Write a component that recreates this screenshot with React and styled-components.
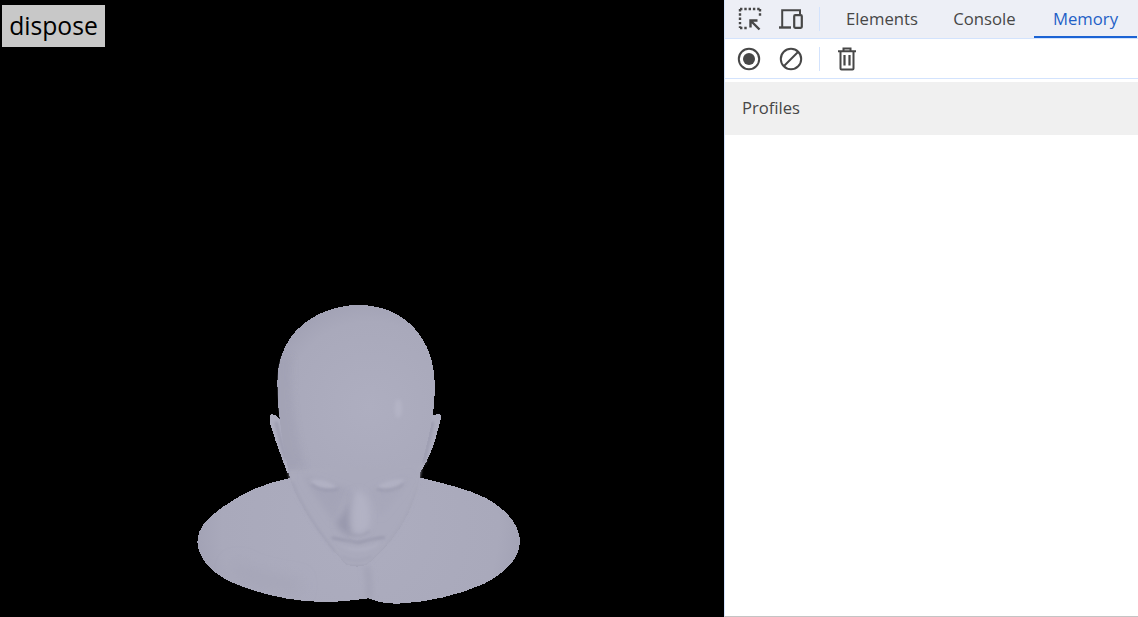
import React from 'react'
import styled, { createGlobalStyle } from 'styled-components'

const GlobalStyle = createGlobalStyle`
  html, body { margin: 0; padding: 0; background: #fff; }
  body { font-family: "Open Sans", "Noto Sans", sans-serif; }
`

const Page = styled.div`
  display: flex;
  width: 1138px;
  height: 617px;
  overflow: hidden;
`
const Viewport = styled.div`
  width: 724px;
  flex: none;
  background: #000;
  display: flex;
  flex-direction: column;
  align-items: flex-start;
`
const DisposeButton = styled.button`
  width: 103px;
  height: 42px;
  margin: 5px 0 0 2px;
  padding: 0;
  border: 0;
  background: #c8c8c8;
  color: #000;
  font-family: "Open Sans", sans-serif;
  font-size: 24.7px;
  line-height: 42px;
`
const HeadDrawing = styled.svg`
  display: block;
  width: 340px;
  height: 310px;
  margin: 253px 0 0 190px;
`
const DevTools = styled.div`
  flex: 1;
  display: flex;
  flex-direction: column;
  border-left: 1px solid #d3e3fd;
  border-bottom: 1px solid #c4c4c4;
  background: #fff;
`
const TabBar = styled.div`
  height: 38px;
  display: flex;
  align-items: center;
  background: #edeff6;
  border-bottom: 1px solid #d3e3fd;
`
const ToolBar = styled.div`
  height: 39px;
  display: flex;
  align-items: center;
  border-bottom: 1px solid #d3e3fd;
`
const IconSlot = styled.span`
  width: ${p => p.$w}px;
  height: 24px;
  flex: none;
  display: flex;
  align-items: center;
  justify-content: center;
  margin-left: ${p => p.$ml || 0}px;
`
const Separator = styled.span`
  width: 1px;
  height: 24px;
  flex: none;
  background: #d3e3fd;
  margin: 0 ${p => p.$mr}px 0 ${p => p.$ml}px;
`
const Tab = styled.div`
  width: ${p => p.$w}px;
  height: 38px;
  box-sizing: border-box;
  flex: none;
  text-align: center;
  font-size: 16.7px;
  line-height: 37px;
  color: ${p => (p.$active ? '#1f5fc6' : '#474747')};
  border-bottom: 2px solid ${p => (p.$active ? '#1b63d4' : 'transparent')};
`
const ProfilesHeader = styled.div`
  height: 53px;
  margin-top: 3px;
  padding-left: 17px;
  background: #f0f0f0;
  color: #474747;
  font-size: 16.6px;
  line-height: 52px;
`

const ICON = '#474747'

const InspectIcon = () => (
  <svg width="24" height="24" viewBox="0 0 24 24" fill="none">
    <path d="M2 2h20M2 2v19M22 2v8M2 21h8" stroke={ICON} strokeWidth="2.4" strokeDasharray="2.4 1.9" />
    <path d="M21.5 22.5 L13 14 M12.5 20.5 V13.5 H19.5" stroke={ICON} strokeWidth="2.4" />
  </svg>
)
const DeviceIcon = () => (
  <svg width="26" height="22" viewBox="0 0 26 22" fill="none">
    <path d="M4.2 19V2.2H22V6" stroke={ICON} strokeWidth="2" />
    <path d="M1 19.5H13" stroke={ICON} strokeWidth="2.4" />
    <rect x="16.2" y="7.2" width="7.6" height="12.6" rx="1" stroke={ICON} strokeWidth="2.2" />
  </svg>
)
const RecordIcon = () => (
  <svg width="24" height="24" viewBox="0 0 24 24" fill="none">
    <circle cx="12" cy="12" r="10.2" stroke={ICON} strokeWidth="2" />
    <circle cx="12" cy="12" r="6" fill={ICON} />
  </svg>
)
const ClearIcon = () => (
  <svg width="24" height="24" viewBox="0 0 24 24" fill="none">
    <circle cx="12" cy="12" r="10.2" stroke={ICON} strokeWidth="2" />
    <path d="M5 19 L19 5" stroke={ICON} strokeWidth="2" />
  </svg>
)
const TrashIcon = () => (
  <svg width="20" height="24" viewBox="0 0 20 24" fill="none">
    <path d="M1 4.2H19M6.5 4V1.5H13.5V4" stroke={ICON} strokeWidth="2" />
    <path d="M3.5 4.5V21.5a1 1 0 0 0 1 1H15.5a1 1 0 0 0 1-1V4.5" stroke={ICON} strokeWidth="2" />
    <path d="M7.5 8V18.5M12.5 8V18.5" stroke={ICON} strokeWidth="2.2" />
  </svg>
)

// outlines traced in a 3x space, same scale as the crops of the reference
const BODY = 'M295 535 C235 548 170 570 115 610 C60 645 22 680 22 725 C25 775 60 815 120 845 C190 875 290 905 400 906 C450 906 500 900 535 895 C555 903 585 912 625 911 C710 908 810 885 885 850 C950 815 990 775 990 720 C985 670 950 630 890 595 C830 565 760 550 690 533 Z'
const SKULL = 'M505 15 C590 15 650 50 692 108 C722 152 735 205 735 265 C735 340 715 420 695 490 C690 540 680 580 655 640 C625 700 580 755 530 795 L500 800 L470 795 C430 755 390 705 350 640 C320 590 300 550 295 510 C280 440 262 340 262 250 C262 195 275 150 302 112 C345 52 425 15 505 15 Z'
const LEFT_EAR = 'M240 345 C250 340 262 345 272 360 L300 440 L300 520 L292 520 C275 470 258 430 248 395 C240 375 236 355 240 345 Z'
const RIGHT_EAR = 'M752 345 C745 340 733 342 722 352 L690 440 L690 510 L695 510 C715 480 735 430 742 395 C748 375 755 355 752 345 Z'

const Blur = ({ id, amount }) => (
  <filter id={id} filterUnits="userSpaceOnUse" x="0" y="0" width="1020" height="930">
    <feGaussianBlur stdDeviation={amount} />
  </filter>
)

const HeadShape = () => (
  <HeadDrawing viewBox="0 0 1020 930">
    <defs>
      <radialGradient id="skullLight" gradientUnits="userSpaceOnUse" cx="540" cy="320" r="340">
        <stop offset="0" stopColor="#aeaec0" />
        <stop offset="0.75" stopColor="#a9a9bb" />
        <stop offset="1" stopColor="#a0a0b3" />
      </radialGradient>
      <radialGradient id="bodyLight" gradientUnits="userSpaceOnUse" cx="510" cy="680" r="520">
        <stop offset="0" stopColor="#adadbf" />
        <stop offset="0.8" stopColor="#a9a9bb" />
        <stop offset="1" stopColor="#a0a0b3" />
      </radialGradient>
      <Blur id="soft" amount={9} />
      <Blur id="softer" amount={22} />
      <Blur id="fine" amount={4} />
      <clipPath id="skullClip"><path d={SKULL} /></clipPath>
      <clipPath id="bodyClip"><path d={BODY} /></clipPath>
    </defs>

    <path d={BODY} fill="url(#bodyLight)" shapeRendering="crispEdges" />
    <g clipPath="url(#bodyClip)">
      <path d="M535 900 C540 865 537 835 530 800" stroke="#a0a0b3" strokeWidth="14" fill="none" filter="url(#soft)" />
      <path d="M130 800 C180 840 260 850 330 860" stroke="#a5a5b7" strokeWidth="40" fill="none" filter="url(#softer)" />
    </g>
    <path d={LEFT_EAR} fill="#afafc1" shapeRendering="crispEdges" />
    <path d={RIGHT_EAR} fill="#adadbf" shapeRendering="crispEdges" />
    <path d="M258 365 C266 400 276 440 288 480" stroke="#9a9aae" strokeWidth="9" fill="none" filter="url(#fine)" />
    <path d="M728 365 C720 410 710 450 700 490" stroke="#9a9aae" strokeWidth="9" fill="none" filter="url(#fine)" />

    {/* the head sits on the shoulders with no hard edge, so only its top half is crisp */}
    <path d={SKULL} fill="url(#skullLight)" shapeRendering="crispEdges" />
    <path d="M295 510 C300 550 320 590 350 640 C390 705 430 755 470 795 L530 795 C580 755 625 700 655 640 C680 580 690 540 695 490 Z" fill="#aaaabc" filter="url(#fine)" />
    <g clipPath="url(#skullClip)">
      {/* left side falloff and the seam by the temple */}
      <path d="M305 170 C300 280 315 400 345 500 L250 500 L250 170 Z" fill="#a1a1b4" filter="url(#soft)" opacity="0.7" />
    </g>

    {/* jaw shading */}
    <path d="M308 545 C332 610 375 680 435 755" stroke="#a3a3b6" strokeWidth="7" fill="none" filter="url(#fine)" />
    <path d="M682 560 C660 630 630 680 590 730" stroke="#a7a7b9" strokeWidth="6" fill="none" filter="url(#fine)" />

    {/* brow and eye sockets */}
    <path d="M340 525 C400 545 450 555 480 570 C460 590 440 640 435 670 C400 620 360 570 340 525 Z" fill="#a4a4b7" filter="url(#soft)" />
    <path d="M660 525 C610 545 570 550 540 570 C550 600 560 620 570 650 C600 620 640 570 660 525 Z" fill="#a7a7ba" filter="url(#soft)" />
    <path d="M360 542 C385 532 425 545 440 562 C410 570 375 565 360 542 Z" fill="#b1b1c3" filter="url(#fine)" />
    <path d="M365 552 C385 572 420 574 445 567" stroke="#9595aa" strokeWidth="5" fill="none" filter="url(#fine)" />
    <path d="M560 560 C585 542 620 537 645 537 C630 560 590 572 560 560 Z" fill="#b1b1c3" filter="url(#fine)" />
    <path d="M560 566 C585 577 620 570 640 552" stroke="#9797ab" strokeWidth="5" fill="none" filter="url(#fine)" />

    {/* nose */}
    <path d="M482 575 C478 610 462 640 438 668 C445 690 468 704 490 710 C475 680 474 620 488 580 Z" fill="#9999ad" filter="url(#soft)" />
    <path d="M500 570 C538 580 545 640 538 678 C528 698 510 702 492 698 C484 660 488 610 500 570 Z" fill="#b2b2c4" filter="url(#soft)" />
    <path d="M468 692 C490 712 520 712 540 692" stroke="#9f9fb2" strokeWidth="6" fill="none" filter="url(#fine)" />

    {/* mouth and chin */}
    <path d="M425 713 C450 720 480 722 505 728 C530 722 560 712 585 712" stroke="#9191a6" strokeWidth="5" fill="none" filter="url(#fine)" />
    <path d="M445 732 C475 750 535 750 570 727 C550 758 480 762 445 732 Z" fill="#b1b1c3" filter="url(#fine)" />
    <path d="M455 768 C480 785 520 785 545 768" stroke="#a4a4b7" strokeWidth="7" fill="none" filter="url(#fine)" />

    {/* small highlight on the forehead */}
    <ellipse cx="625" cy="325" rx="11" ry="28" fill="#b3b3c5" filter="url(#fine)" />
  </HeadDrawing>
)

export default function App() {
  return (
    <Page>
      <GlobalStyle />
      <Viewport>
        <DisposeButton>dispose</DisposeButton>
        <HeadShape />
      </Viewport>
      <DevTools>
        <TabBar>
          <IconSlot $w={24} $ml={13}><InspectIcon /></IconSlot>
          <IconSlot $w={26} $ml={16}><DeviceIcon /></IconSlot>
          <Separator $ml={15} $mr={9} />
          <Tab $w={106}>Elements</Tab>
          <Tab $w={99}>Console</Tab>
          <Tab $w={103} $active>Memory</Tab>
        </TabBar>
        <ToolBar>
          <IconSlot $w={24} $ml={12}><RecordIcon /></IconSlot>
          <IconSlot $w={24} $ml={18}><ClearIcon /></IconSlot>
          <Separator $ml={16} $mr={17} />
          <IconSlot $w={20}><TrashIcon /></IconSlot>
        </ToolBar>
        <ProfilesHeader>Profiles</ProfilesHeader>
      </DevTools>
    </Page>
  )
}
